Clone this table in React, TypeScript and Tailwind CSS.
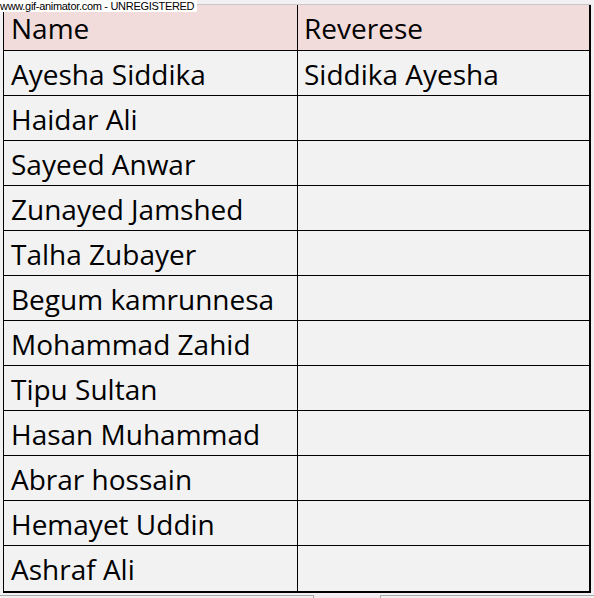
import React from "react";

const names = [
  ["Ayesha Siddika", "Siddika Ayesha"],
  ["Haidar Ali", ""],
  ["Sayeed Anwar", ""],
  ["Zunayed Jamshed", ""],
  ["Talha Zubayer", ""],
  ["Begum kamrunnesa", ""],
  ["Mohammad Zahid", ""],
  ["Tipu Sultan", ""],
  ["Hasan Muhammad", ""],
  ["Abrar hossain", ""],
  ["Hemayet Uddin", ""],
  ["Ashraf Ali", ""],
];

export default function App() {
  return (
    <div
      className="relative w-[594px] h-[598px] bg-[#f2f0f2] overflow-hidden"
      style={{ fontFamily: "'Open Sans', Lato, sans-serif" }}
    >
      <div className="pt-[4px] pl-[3px]">
        <div className="w-[588px] border-t border-t-[#c8c8c8]">
          <div className="border-l border-l-black border-r-2 border-r-black border-b-2 border-b-black">
            <div className="flex h-[46px] bg-[#f2dcdb] border-b border-b-black">
              <div className="w-[294px] border-r border-r-black pl-[7px] pt-[8px] text-[28px] text-black leading-[30px]">
                Name
              </div>
              <div className="flex-1 pl-[6px] pt-[8px] text-[28px] text-black leading-[30px]">
                Reverese
              </div>
            </div>
            {names.map(([a, b], i) => (
              <div
                key={i}
                className={
                  "flex h-[45px] bg-[#f2f2f3] " +
                  (i < names.length - 1 ? "border-b border-b-black" : "")
                }
              >
                <div className="w-[294px] border-r border-r-black pl-[7px] pt-[8px] text-[28px] text-black leading-[30px]">
                  {a}
                </div>
                <div className="flex-1 pl-[6px] pt-[8px] text-[28px] text-black leading-[30px]">
                  {b}
                </div>
              </div>
            ))}
          </div>
        </div>
      </div>
      <div className="flex h-[3px] mt-[2px]">
        <div className="w-[314px] border-t border-r border-[#a8a8a8] bg-[#f0f0f0]" />
        <div className="w-[66px] bg-[#f3eaf2]" />
        <div className="flex-1 border-t border-l border-[#a8a8a8] bg-[#f0f0f0]" />
      </div>
      <div
        className="absolute left-0 top-0 bg-white text-[11px] leading-[12px] tracking-[-0.3px] text-black pr-[3px]"
        style={{ fontFamily: "'Liberation Sans', Arial, sans-serif" }}
      >
        www.gif-animator.com - UNREGISTERED
      </div>
    </div>
  );
}
